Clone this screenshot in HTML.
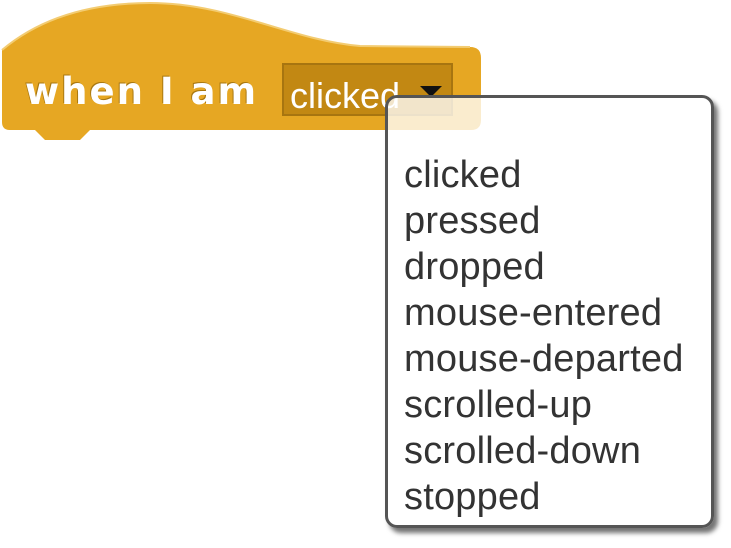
<!DOCTYPE html>
<html><head><style>
html,body{margin:0;padding:0;background:#fff;width:731px;height:548px;overflow:hidden;position:relative;font-family:"Liberation Sans",Arial,sans-serif}
.t{position:absolute;white-space:nowrap}
.menu{position:absolute;left:385px;top:95px;width:323px;height:427px;border:3px solid #555;border-radius:12px;background:rgba(255,255,255,0.78);box-shadow:4px 5px 5px rgba(0,0,0,0.55)}
.item{position:absolute;left:404px;font-size:38px;color:#333;line-height:1;letter-spacing:0.2px}
</style></head><body>
<svg width="731" height="548" style="position:absolute;left:0;top:0">
<path d="M2,50 C40,18 90,3 150,3 C230,3 290,40 360,46 L470,47 Q481,47 481,58 L481,120 Q481,130 471,130 L90,130 L80,140 L45,140 L35,130 L10,130 Q2,130 2,122 Z" fill="#e6a723"/>
<path d="M2,50 C40,18 90,3 150,3 C230,3 290,40 360,46 L470,47" fill="none" stroke="#f3cc72" stroke-width="2"/>
<rect x="283" y="64" width="169" height="51" fill="#c28813" stroke="#a77510" stroke-width="2"/>
<path d="M420,86 L442,86 L431,97 Z" fill="#111"/>
</svg>
<div class="t" style="left:25px;top:70px;font-family:'DejaVu Sans',sans-serif;font-size:37px;font-weight:bold;color:#fff;letter-spacing:2px;text-shadow:-1px -1px 0 #a87710">when I am</div>
<div class="t" style="left:290px;top:75px;font-size:36px;color:#fff">clicked</div>
<div class="menu"></div>
<div class="t item" style="top:156px">clicked</div>
<div class="t item" style="top:202px">pressed</div>
<div class="t item" style="top:248px">dropped</div>
<div class="t item" style="top:294px">mouse-entered</div>
<div class="t item" style="top:340px">mouse-departed</div>
<div class="t item" style="top:386px">scrolled-up</div>
<div class="t item" style="top:432px">scrolled-down</div>
<div class="t item" style="top:478px">stopped</div>
</body></html>
